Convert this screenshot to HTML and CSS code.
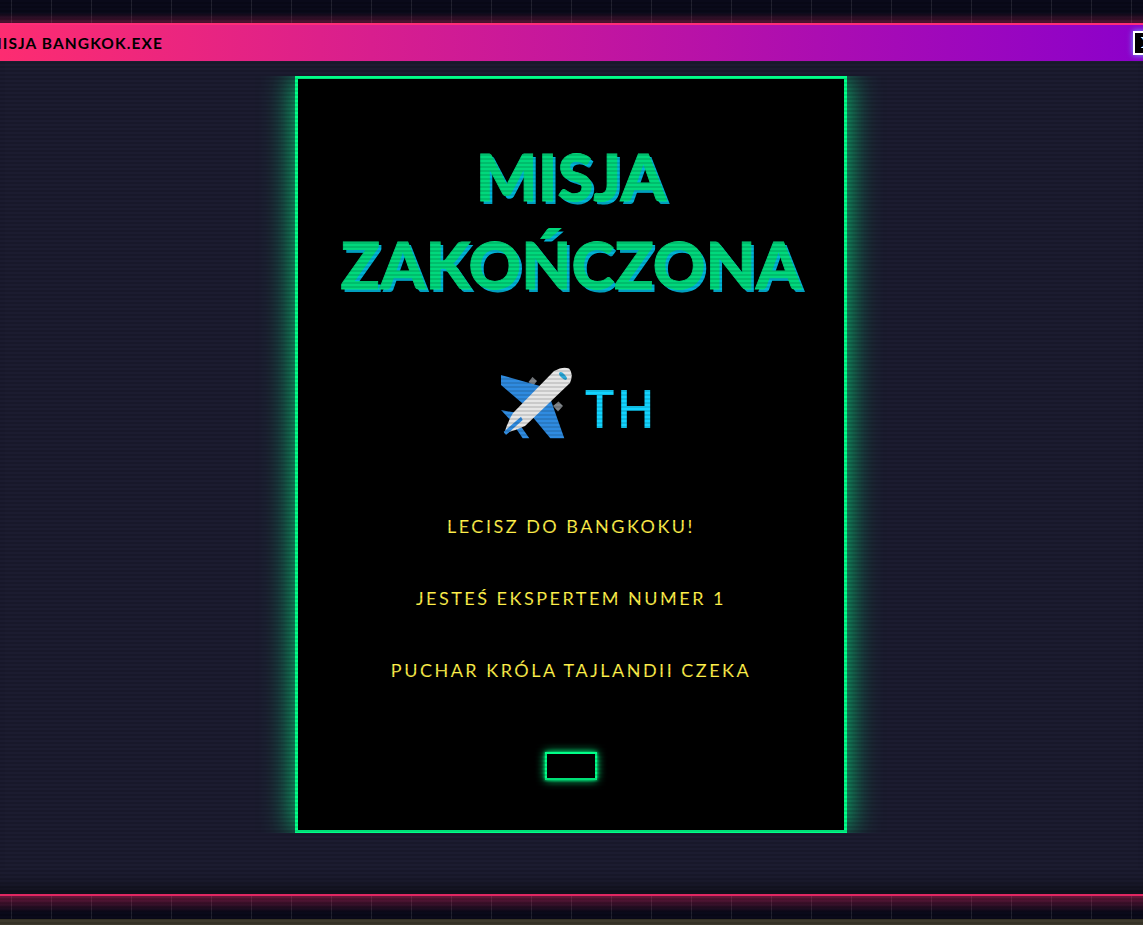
FILE: index.html
```html
<!DOCTYPE html>
<html lang="pl">

<head>
    <meta charset="UTF-8">
    <meta name="viewport" content="width=device-width, initial-scale=1.0">
    <title>Misja Bangkok</title>
    <link rel="stylesheet" href="styles.css">
</head>

<body>
    <div class="strip"></div>

    <div class="title-bar">
        <span class="title-text">MISJA BANGKOK.EXE</span>
        <button class="close-btn">X</button>
    </div>

    <main class="desktop">
        <div class="panel-clip">
            <section class="panel">
                <h1 class="headline">MISJA ZAKOŃCZONA</h1>

                <div class="flight">
                    <svg class="plane" viewBox="0 0 72 72" width="72" height="72" aria-label="samolot">
                        <polygon fill="#80858a" points="27.5,15 31.5,10 36,14 32,19" />
                        <polygon fill="#80858a" points="52,39 57.5,34.5 62,39 57,44.5" />
                        <polygon fill="#2f8be0" points="0,8 41.7,19.7 23.3,38 0,18" />
                        <polygon fill="#2f8be0" points="48,28 63.3,71.3 49.3,71.3 30,48" />
                        <polygon fill="#2f8be0" points="0,43 18,46.3 12,56" />
                        <polygon fill="#2f8be0" points="18.3,57 28.3,71.3 21.7,71.3 14,60" />
                        <path fill="#e6e6e6" d="M53 4 Q62 -1 68 1.5 Q73 6 69 16 L24 59 Q13 64 3.3 66.3 Q6 56 12 46 Z" />
                        <polygon fill="#2f8be0" points="20,49.7 21.7,53 5,68 2.7,64.7" />
                        <ellipse fill="#2aa8d8" cx="62" cy="9" rx="5" ry="2.2" transform="rotate(45 62 9)" />
                    </svg>
                    <span class="flag">TH</span>
                </div>

                <div class="messages">
                    <p>LECISZ DO BANGKOKU!</p>
                    <p>JESTEŚ EKSPERTEM NUMER 1</p>
                    <p>PUCHAR KRÓLA TAJLANDII CZEKA</p>
                </div>

                <button class="ok-btn"></button>
            </section>
        </div>
    </main>

    <div class="strip strip-bottom"></div>
    <div class="under"></div>

    <div class="scanlines"></div>
</body>

</html>
```

FILE: styles.css
```css
* {
    box-sizing: border-box;
}

html,
body {
    height: 100%;
}

body {
    display: flex;
    flex-direction: column;
    margin: 0;
    overflow: hidden;
    font-family: Lato, "Noto Sans", sans-serif;
    background-color: #0a0a1a;
}

.strip {
    flex: none;
    height: 23px;
    background-color: #0a0a1a;
    background-image:
        linear-gradient(to bottom, rgba(255, 45, 111, 0) 55%, rgba(255, 45, 111, 0.3) 100%),
        linear-gradient(to right, rgba(255, 255, 255, 0.1) 1px, transparent 1px);
    background-size: 100% 100%, 40px 100%;
    background-position: 0 0, 11px 0;
}

.strip-bottom {
    background-image:
        linear-gradient(to top, rgba(255, 45, 111, 0) 30%, rgba(255, 45, 111, 0.38) 100%),
        linear-gradient(to right, rgba(255, 255, 255, 0.1) 1px, transparent 1px);
}

.under {
    flex: 1;
    background-color: #3d3a2c;
}

.title-bar {
    position: relative;
    z-index: 2;
    flex: none;
    display: flex;
    align-items: center;
    justify-content: space-between;
    height: 38px;
    margin: 0 -17px 0 -23px;
    padding: 0 0 0 10px;
    border-top: 2px solid #ff2d78;
    background: linear-gradient(90deg, #ff2d6f, #8a00cc);
}

.title-text {
    font-size: 15.5px;
    font-weight: 700;
    letter-spacing: 1.1px;
    color: #000;
}

.close-btn {
    width: 27px;
    height: 24px;
    padding: 0;
    border: 2px solid #fff;
    background-color: #000;
    color: #fff;
    font-family: "DejaVu Serif", serif;
    font-size: 14px;
    font-weight: 700;
    box-shadow: 0 0 6px #66aaff;
}

.desktop {
    flex: none;
    height: 835px;
    display: flex;
    justify-content: center;
    padding: 15px 1px 0 0;
    background-color: #1c1c30;
    border-bottom: 2px solid #ff2d6f;
    box-shadow: inset 0 -20px 16px -14px rgba(0, 0, 0, 0.55);
}

.panel-clip {
    height: 757px;
    padding: 0 40px;
    overflow: hidden;
}

.panel {
    display: flex;
    flex-direction: column;
    align-items: center;
    width: 552px;
    height: 757px;
    padding-top: 53px;
    border: 3px solid #00ff88;
    background-color: #000;
    box-shadow: 0 0 30px rgba(0, 255, 136, 0.85);
}

.headline {
    width: 480px;
    margin: 0;
    font-size: 65px;
    font-weight: 900;
    line-height: 88px;
    text-align: center;
    color: #00d87c;
    -webkit-text-stroke: 0.8px #00d87c;
    text-shadow: 3px 3px 0 #00b4d8;
}

.flight {
    display: flex;
    align-items: center;
    gap: 12px;
    margin-top: 59px;
    height: 72px;
    padding-left: 16px;
}

.flag {
    padding-top: 10px;
    font-family: "Noto Sans", sans-serif;
    font-size: 52px;
    font-weight: 500;
    line-height: 72px;
    letter-spacing: 2px;
    color: #12d4ff;
}

.messages {
    display: flex;
    flex-direction: column;
    gap: 47px;
    margin-top: 75px;
    text-align: center;
}

.messages p {
    margin: 0;
    font-size: 18px;
    line-height: 25px;
    letter-spacing: 2.5px;
    color: #fff04a;
}

.ok-btn {
    width: 52px;
    height: 28px;
    margin-top: 69px;
    padding: 0;
    border: 2px solid #00ff88;
    background-color: #000;
    box-shadow: 0 0 10px #00ff88, 0 0 3px #00ff88;
}

.scanlines {
    position: fixed;
    inset: 0;
    z-index: 1;
    pointer-events: none;
    background-image: repeating-linear-gradient(to bottom, rgba(0, 0, 0, 0) 0, rgba(0, 0, 0, 0) 2px, rgba(0, 0, 0, 0.12) 2px, rgba(0, 0, 0, 0.12) 4px);
}
```
